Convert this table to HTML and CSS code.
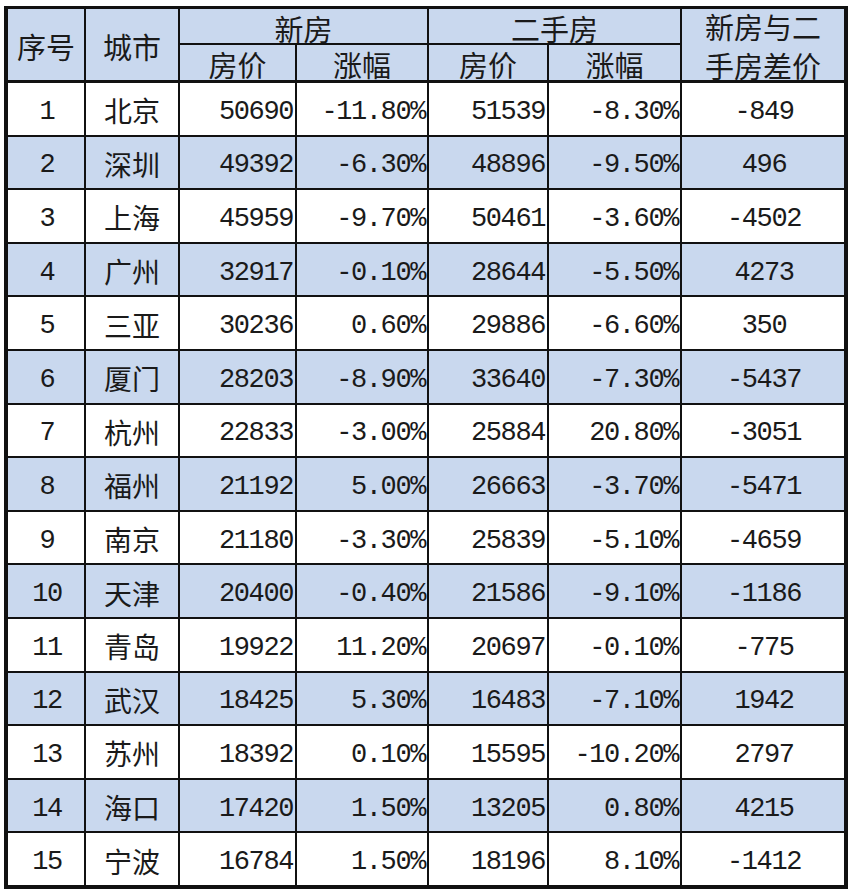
FILE: index.html
```html
<!DOCTYPE html>
<html lang="zh-CN">
<head>
<meta charset="utf-8">
<title>房价对比</title>
<link rel="stylesheet" href="styles.css">
</head>
<body>
<div class="sheet">
  <div class="cell head span-rows zh">序号</div>
  <div class="cell head span-rows zh">城市</div>
  <div class="cell head group zh">新房</div>
  <div class="cell head group zh">二手房</div>
  <div class="cell head span-rows diff zh">新房与二<br>手房差价</div>
  <div class="cell head sub zh">房价</div>
  <div class="cell head sub zh">涨幅</div>
  <div class="cell head sub zh">房价</div>
  <div class="cell head sub zh">涨幅</div>

  <div class="row"><div class="cell c num">1</div><div class="cell c zh">北京</div><div class="cell r num">50690</div><div class="cell r num">-11.80%</div><div class="cell r num">51539</div><div class="cell r num">-8.30%</div><div class="cell c num">-849</div></div>
  <div class="row alt"><div class="cell c num">2</div><div class="cell c zh">深圳</div><div class="cell r num">49392</div><div class="cell r num">-6.30%</div><div class="cell r num">48896</div><div class="cell r num">-9.50%</div><div class="cell c num">496</div></div>
  <div class="row"><div class="cell c num">3</div><div class="cell c zh">上海</div><div class="cell r num">45959</div><div class="cell r num">-9.70%</div><div class="cell r num">50461</div><div class="cell r num">-3.60%</div><div class="cell c num">-4502</div></div>
  <div class="row alt"><div class="cell c num">4</div><div class="cell c zh">广州</div><div class="cell r num">32917</div><div class="cell r num">-0.10%</div><div class="cell r num">28644</div><div class="cell r num">-5.50%</div><div class="cell c num">4273</div></div>
  <div class="row"><div class="cell c num">5</div><div class="cell c zh">三亚</div><div class="cell r num">30236</div><div class="cell r num">0.60%</div><div class="cell r num">29886</div><div class="cell r num">-6.60%</div><div class="cell c num">350</div></div>
  <div class="row alt"><div class="cell c num">6</div><div class="cell c zh">厦门</div><div class="cell r num">28203</div><div class="cell r num">-8.90%</div><div class="cell r num">33640</div><div class="cell r num">-7.30%</div><div class="cell c num">-5437</div></div>
  <div class="row"><div class="cell c num">7</div><div class="cell c zh">杭州</div><div class="cell r num">22833</div><div class="cell r num">-3.00%</div><div class="cell r num">25884</div><div class="cell r num">20.80%</div><div class="cell c num">-3051</div></div>
  <div class="row alt"><div class="cell c num">8</div><div class="cell c zh">福州</div><div class="cell r num">21192</div><div class="cell r num">5.00%</div><div class="cell r num">26663</div><div class="cell r num">-3.70%</div><div class="cell c num">-5471</div></div>
  <div class="row"><div class="cell c num">9</div><div class="cell c zh">南京</div><div class="cell r num">21180</div><div class="cell r num">-3.30%</div><div class="cell r num">25839</div><div class="cell r num">-5.10%</div><div class="cell c num">-4659</div></div>
  <div class="row alt"><div class="cell c num">10</div><div class="cell c zh">天津</div><div class="cell r num">20400</div><div class="cell r num">-0.40%</div><div class="cell r num">21586</div><div class="cell r num">-9.10%</div><div class="cell c num">-1186</div></div>
  <div class="row"><div class="cell c num">11</div><div class="cell c zh">青岛</div><div class="cell r num">19922</div><div class="cell r num">11.20%</div><div class="cell r num">20697</div><div class="cell r num">-0.10%</div><div class="cell c num">-775</div></div>
  <div class="row alt"><div class="cell c num">12</div><div class="cell c zh">武汉</div><div class="cell r num">18425</div><div class="cell r num">5.30%</div><div class="cell r num">16483</div><div class="cell r num">-7.10%</div><div class="cell c num">1942</div></div>
  <div class="row"><div class="cell c num">13</div><div class="cell c zh">苏州</div><div class="cell r num">18392</div><div class="cell r num">0.10%</div><div class="cell r num">15595</div><div class="cell r num">-10.20%</div><div class="cell c num">2797</div></div>
  <div class="row alt"><div class="cell c num">14</div><div class="cell c zh">海口</div><div class="cell r num">17420</div><div class="cell r num">1.50%</div><div class="cell r num">13205</div><div class="cell r num">0.80%</div><div class="cell c num">4215</div></div>
  <div class="row"><div class="cell c num">15</div><div class="cell c zh">宁波</div><div class="cell r num">16784</div><div class="cell r num">1.50%</div><div class="cell r num">18196</div><div class="cell r num">8.10%</div><div class="cell c num">-1412</div></div>
</div>
</body>
</html>
```
FILE: styles.css
```css
html, body {
  margin: 0;
  padding: 0;
  background: #ffffff;
}

body {
  padding: 6px 0 0 4px;
}

.sheet {
  display: grid;
  grid-template-columns: 76px 92px 115px 130px 118px 131px 162px;
  grid-template-rows: 34px 36px repeat(15, 51.6px);
  gap: 2px;
  width: max-content;
  background: #111111;
  border-style: solid;
  border-color: #111111;
  border-width: 3px 4px 4px 4px;
  color: #1a1a1a;
}

.row {
  display: contents;
}

.cell {
  display: flex;
  align-items: center;
  background: #ffffff;
  overflow: visible;
  white-space: nowrap;
}

.row.alt .cell,
.head {
  background: #c9d8ee;
}

.head {
  justify-content: center;
}

.span-rows {
  grid-row: span 2;
  border-bottom: 1px solid #111111;
}

.group {
  grid-column: span 2;
  padding-top: 5px;
}

.sub {
  border-bottom: 1px solid #111111;
  padding-top: 2px;
}

.diff {
  text-align: center;
  line-height: 39px;
  padding-top: 2px;
}

.zh {
  font-family: "Noto Sans CJK SC", "Noto Sans", sans-serif;
  font-size: 28px;
  font-weight: 400;
  padding-top: 3px;
}

.head.zh {
  font-size: 29px;
}

.num {
  font-family: "Liberation Mono", "DejaVu Sans Mono", monospace;
  font-size: 27px;
  letter-spacing: -1.4px;
  padding-top: 6px;
}

.c {
  justify-content: center;
}

.c.num {
  padding-left: 2px;
}

.r {
  justify-content: flex-end;
  padding-right: 2px;
}
```
